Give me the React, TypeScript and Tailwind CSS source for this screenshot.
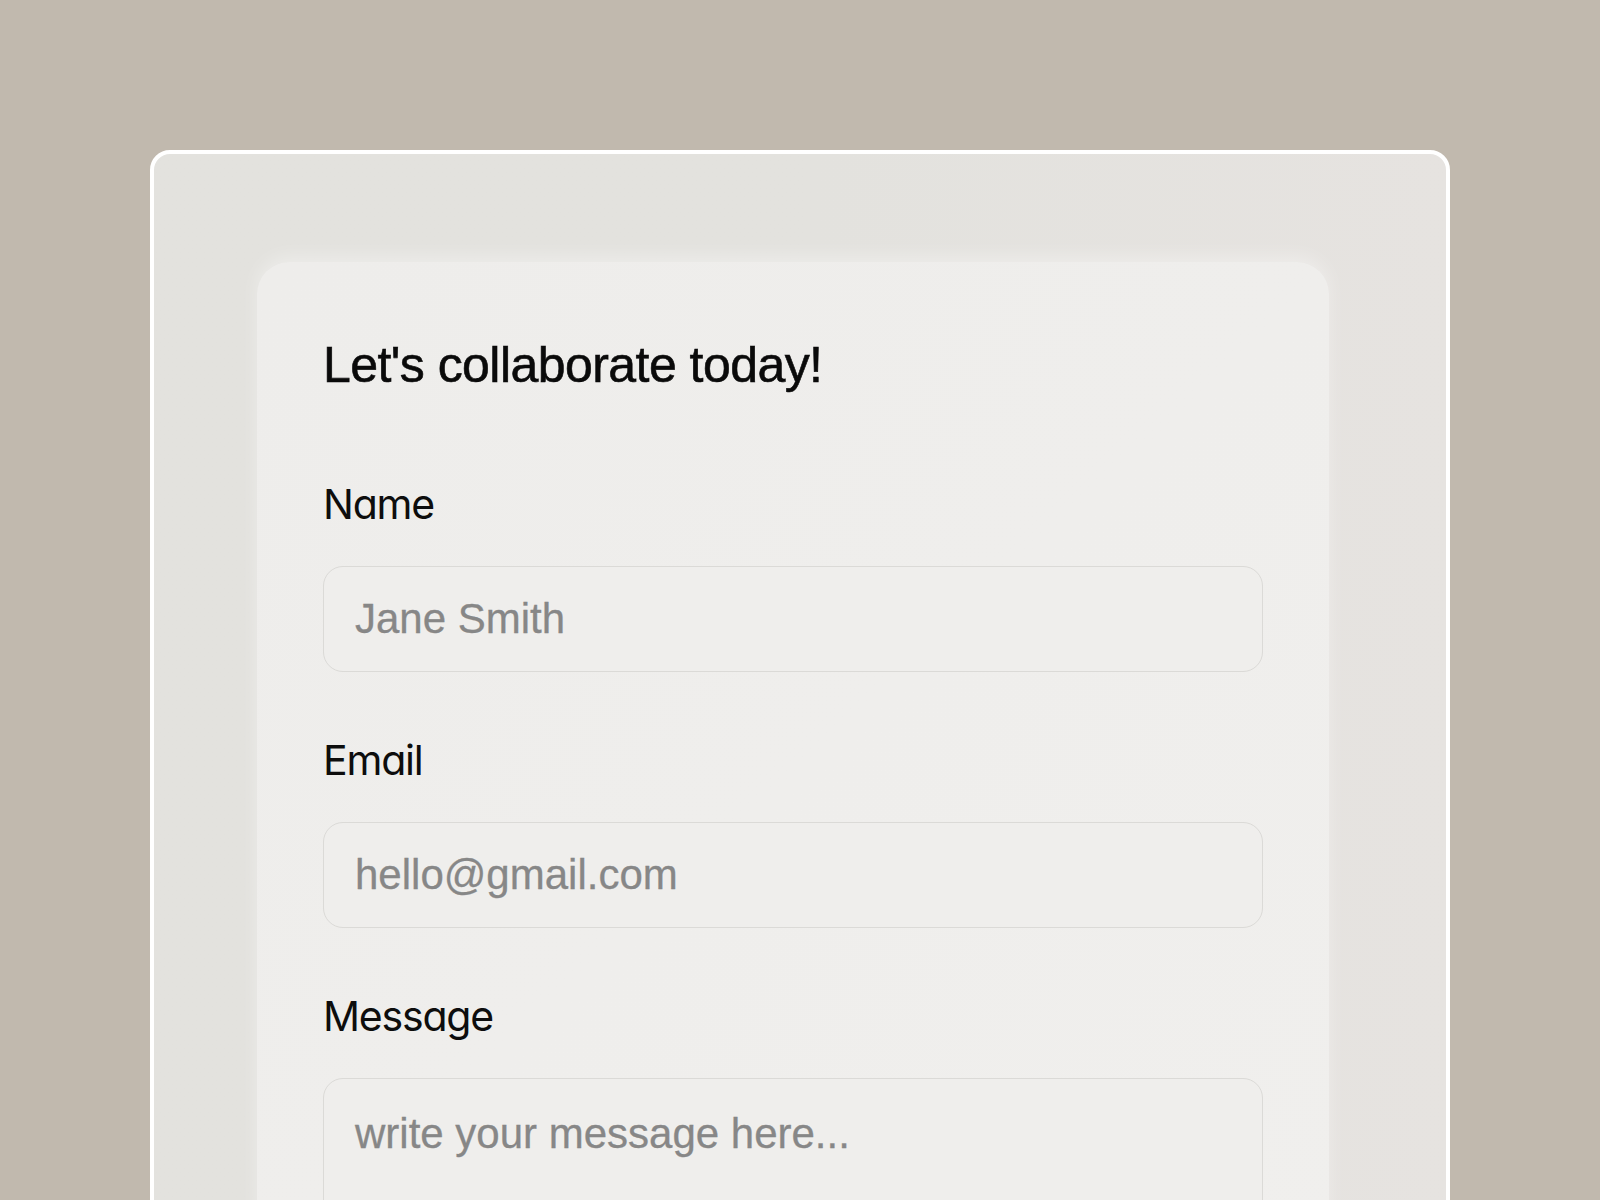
import React from 'react';

const labelCls =
  "block text-[41px] leading-[49px] tracking-[-1.2px] text-[#0d0d0d] mb-[37px] font-['Inter','Liberation_Sans',sans-serif] [font-feature-settings:'cv11','ss01']";

const fieldCls =
  "w-full bg-[#efeeec] border-[1.5px] border-[#dbdad7] rounded-[20px] pl-[31px] pr-6 text-[42px] text-[#333] font-['Liberation_Sans',Arial,sans-serif] placeholder:text-[#878787] [-webkit-text-stroke:0.3px_#878787] outline-none";

export default function App() {
  return (
    <div className="h-[1200px] overflow-hidden bg-[#c1b9ae] px-[150px] pt-[150px]">
      <div className="h-[1100px] rounded-[20px] border-4 border-white bg-gradient-to-r from-[#e3e2de] via-[#e3e2de] to-[#e6e3e0] pl-[103px] pr-[117px] pt-[108px]">
        <div className="h-[1000px] rounded-[32px] bg-gradient-to-br from-[#eeedeb] to-[#f0efed] px-[66px] pt-[73px] shadow-[0_-6px_18px_rgba(255,255,255,0.35)]">
          <h1 className="text-[50px] leading-[60px] tracking-[-0.55px] text-[#0a0a0a] font-['Liberation_Sans',Arial,sans-serif] [-webkit-text-stroke:0.6px_#0a0a0a] mb-[85px]">
            Let's collaborate today!
          </h1>

          <form className="flex flex-col gap-[64px]">
            <div>
              <label className={labelCls}>Name</label>
              <input type="text" placeholder="Jane Smith" className={`${fieldCls} h-[106px]`} />
            </div>
            <div>
              <label className={labelCls}>Email</label>
              <input type="email" placeholder="hello@gmail.com" className={`${fieldCls} h-[106px]`} />
            </div>
            <div>
              <label className={labelCls}>Message</label>
              <textarea
                placeholder="write your message here..."
                className={`${fieldCls} h-[240px] pt-[30px] leading-[50px] resize-none`}
              />
            </div>
          </form>
        </div>
      </div>
    </div>
  );
}
